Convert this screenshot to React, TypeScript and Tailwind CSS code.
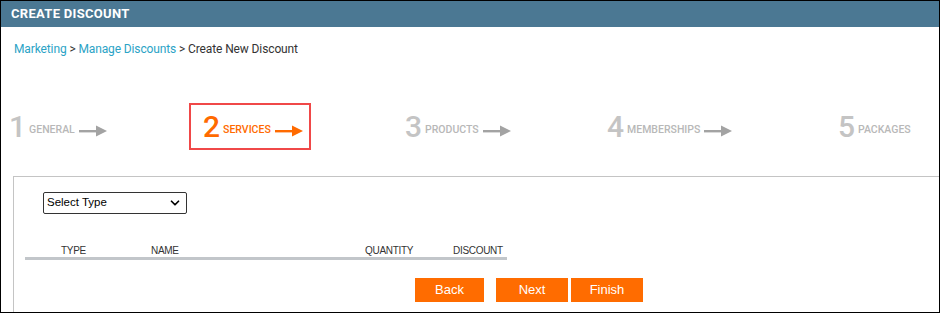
import { ChevronDown } from 'lucide-react';

interface Step {
  num: number;
  label: string;
  active?: boolean;
  arrow: boolean;
}

const steps: Step[] = [
  { num: 1, label: 'GENERAL', arrow: true },
  { num: 2, label: 'SERVICES', active: true, arrow: true },
  { num: 3, label: 'PRODUCTS', arrow: true },
  { num: 4, label: 'MEMBERSHIPS', arrow: true },
  { num: 5, label: 'PACKAGES', arrow: false },
];

const Arrow = ({ color }: { color: string }) => (
  <svg width="28" height="12" viewBox="0 0 28 12" className="ml-[4px] mt-[8px]">
    <rect x="0" y="5" width="18" height="2.4" fill={color} />
    <polygon points="17,0.5 28,6 17,11.5" fill={color} />
  </svg>
);

const StepItem = ({ step }: { step: Step }) => {
  const digit = step.active ? 'text-[#ff6a00]' : 'text-[#c4c4c4]';
  const label = step.active ? 'text-[#ff6a00]' : 'text-[#b8b8b8]';
  return (
    <div className="flex items-center">
      <span className={`text-[30px] leading-none font-medium ${digit}`}>{step.num}</span>
      <span className={`ml-[3px] mt-[6px] text-[10.5px] font-medium tracking-[0px] ${label}`}>{step.label}</span>
      {step.arrow && <Arrow color={step.active ? '#ff6a00' : '#a3a3a3'} />}
    </div>
  );
};

export default function App() {
  return (
    <div className="w-[940px] h-[313px] border border-black bg-white flex flex-col font-['Roboto',sans-serif] overflow-hidden">
      <div className="h-[26px] bg-[#4b7893] flex items-center pl-[10px]">
        <span className="text-white text-[13px] font-bold tracking-[0.3px]">CREATE DISCOUNT</span>
      </div>

      <div className="pt-[14px] pl-[13px] text-[12px] leading-[16px] tracking-[-0.12px] text-[#333]">
        <span className="text-[#2ba3c6]">Marketing</span>
        <span> &gt; </span>
        <span className="text-[#2ba3c6]">Manage Discounts</span>
        <span> &gt; Create New Discount</span>
      </div>

      <div className="mt-[46px] h-[47px] grid grid-cols-[188px_216px_202px_231px_1fr]">
        <div className="pl-[8px] flex items-center">
          <StepItem step={steps[0]} />
        </div>
        <div className="flex items-center">
          <div className="w-[122px] h-[47px] border-2 border-[#f04848] pl-[12px] flex items-center">
            <StepItem step={steps[1]} />
          </div>
        </div>
        <div className="flex items-center">
          <StepItem step={steps[2]} />
        </div>
        <div className="flex items-center">
          <StepItem step={steps[3]} />
        </div>
        <div className="flex items-center">
          <StepItem step={steps[4]} />
        </div>
      </div>

      <div className="mt-[26px] ml-[12px] flex-1 border-t border-l border-[#c4c4c4] pt-[15px] pl-[29px]">
        <div className="w-[144px] h-[22px] border border-[#333] rounded-[2px] flex items-center justify-between px-[3px] font-['Liberation_Sans',sans-serif] text-[11.5px] text-black">
          <span>Select Type</span>
          <ChevronDown size={14} strokeWidth={3} className="mr-[1px]" />
        </div>

        <div className="-ml-[18px] mt-[29px] w-[482px] h-[17px] border-b-[3px] border-[#c2c6ca] font-['Liberation_Sans',sans-serif] text-[10px] text-[#333] tracking-[-0.3px]">
          <div className="flex h-full items-center">
            <span className="ml-[36px] w-[90px]">TYPE</span>
            <span className="w-[214px]">NAME</span>
            <span className="w-[88px]">QUANTITY</span>
            <span>DISCOUNT</span>
          </div>
        </div>

        <div className="mt-[18px] ml-[372px] flex font-['Liberation_Sans',sans-serif] text-[13px] text-white">
          <div className="w-[69px] h-[24px] bg-[#ff6c00] flex items-center justify-center">Back</div>
          <div className="ml-[12px] w-[72px] h-[24px] bg-[#ff6c00] flex items-center justify-center">Next</div>
          <div className="ml-[3px] w-[72px] h-[24px] bg-[#ff6c00] flex items-center justify-center">Finish</div>
        </div>
      </div>
    </div>
  );
}
